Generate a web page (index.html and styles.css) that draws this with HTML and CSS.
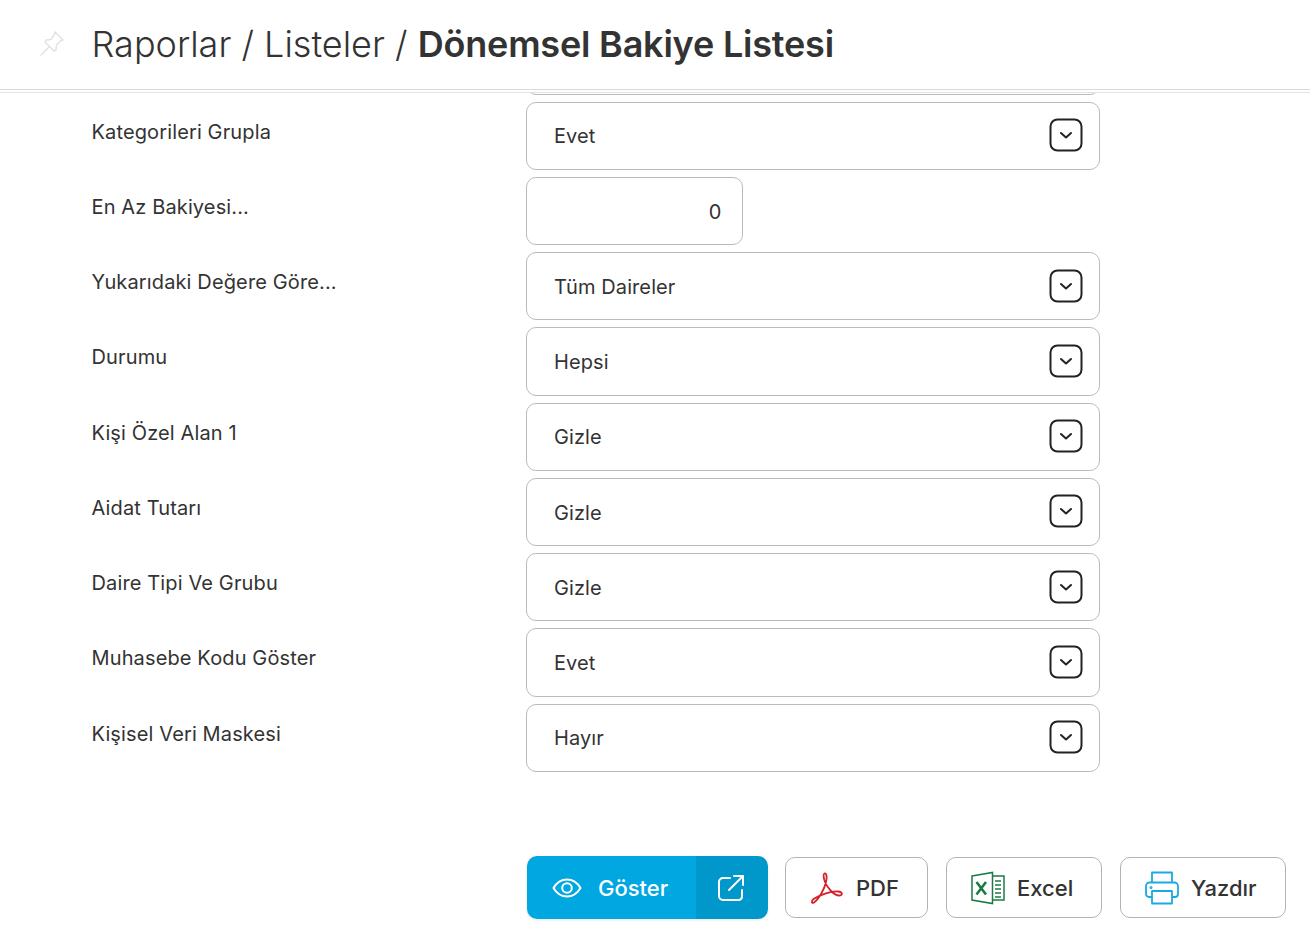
FILE: index.html
```html
<!DOCTYPE html>
<html lang="tr">
<head>
  <meta charset="UTF-8" />
  <meta name="viewport" content="width=device-width, initial-scale=1.0"/>
  <title>Dönemsel Bakiye Listesi</title>
  <link rel="stylesheet" href="styles.css">
</head>
<body>

  <header class="page-header">
    <svg class="pin" width="26" height="26" viewBox="0 0 26 26" fill="none" stroke="#e2e2e2" stroke-width="1.5" stroke-linejoin="round" stroke-linecap="round">
      <path d="M16 2 L24 10 L21.5 11 L17.5 15 L17 20 L15 21 L6 12 L7 10 L12 9.500 L15 5 Z"/>
      <path d="M10 17 L2 25"/>
    </svg>
    <h1>Raporlar / Listeler / <strong>Dönemsel Bakiye Listesi</strong></h1>
  </header>

  <main class="form-area">
    <div class="row row-hidden">
      <label></label>
      <div class="select"></div>
    </div>

    <div class="row">
      <label>Kategorileri Grupla</label>
      <div class="select"><span>Evet</span>
        <svg class="chevron" width="34" height="34" viewBox="0 0 34 34" fill="none" stroke="#222" stroke-width="2"><rect x="1.500" y="1.500" width="31" height="31" rx="7"/><path d="M12 15 L17 19.500 L22 15" stroke-linecap="round" stroke-linejoin="round"/></svg>
      </div>
    </div>

    <div class="row">
      <label>En Az Bakiyesi...</label>
      <div class="number">0</div>
    </div>

    <div class="row">
      <label>Yukarıdaki Değere Göre...</label>
      <div class="select"><span>Tüm Daireler</span>
        <svg class="chevron" width="34" height="34" viewBox="0 0 34 34" fill="none" stroke="#222" stroke-width="2"><rect x="1.500" y="1.500" width="31" height="31" rx="7"/><path d="M12 15 L17 19.500 L22 15" stroke-linecap="round" stroke-linejoin="round"/></svg>
      </div>
    </div>

    <div class="row">
      <label>Durumu</label>
      <div class="select"><span>Hepsi</span>
        <svg class="chevron" width="34" height="34" viewBox="0 0 34 34" fill="none" stroke="#222" stroke-width="2"><rect x="1.500" y="1.500" width="31" height="31" rx="7"/><path d="M12 15 L17 19.500 L22 15" stroke-linecap="round" stroke-linejoin="round"/></svg>
      </div>
    </div>

    <div class="row">
      <label>Kişi Özel Alan 1</label>
      <div class="select"><span>Gizle</span>
        <svg class="chevron" width="34" height="34" viewBox="0 0 34 34" fill="none" stroke="#222" stroke-width="2"><rect x="1.500" y="1.500" width="31" height="31" rx="7"/><path d="M12 15 L17 19.500 L22 15" stroke-linecap="round" stroke-linejoin="round"/></svg>
      </div>
    </div>

    <div class="row">
      <label>Aidat Tutarı</label>
      <div class="select"><span>Gizle</span>
        <svg class="chevron" width="34" height="34" viewBox="0 0 34 34" fill="none" stroke="#222" stroke-width="2"><rect x="1.500" y="1.500" width="31" height="31" rx="7"/><path d="M12 15 L17 19.500 L22 15" stroke-linecap="round" stroke-linejoin="round"/></svg>
      </div>
    </div>

    <div class="row">
      <label>Daire Tipi Ve Grubu</label>
      <div class="select"><span>Gizle</span>
        <svg class="chevron" width="34" height="34" viewBox="0 0 34 34" fill="none" stroke="#222" stroke-width="2"><rect x="1.500" y="1.500" width="31" height="31" rx="7"/><path d="M12 15 L17 19.500 L22 15" stroke-linecap="round" stroke-linejoin="round"/></svg>
      </div>
    </div>

    <div class="row">
      <label>Muhasebe Kodu Göster</label>
      <div class="select"><span>Evet</span>
        <svg class="chevron" width="34" height="34" viewBox="0 0 34 34" fill="none" stroke="#222" stroke-width="2"><rect x="1.500" y="1.500" width="31" height="31" rx="7"/><path d="M12 15 L17 19.500 L22 15" stroke-linecap="round" stroke-linejoin="round"/></svg>
      </div>
    </div>

    <div class="row">
      <label>Kişisel Veri Maskesi</label>
      <div class="select"><span>Hayır</span>
        <svg class="chevron" width="34" height="34" viewBox="0 0 34 34" fill="none" stroke="#222" stroke-width="2"><rect x="1.500" y="1.500" width="31" height="31" rx="7"/><path d="M12 15 L17 19.500 L22 15" stroke-linecap="round" stroke-linejoin="round"/></svg>
      </div>
    </div>
  </main>

  <footer class="actions">
    <div class="btn-main">
      <button class="btn-show">
        <svg width="30" height="22" viewBox="0 0 30 22" fill="none" stroke="#fff" stroke-width="2"><path d="M1.500 11 C5 5 9.500 2.500 15 2.500 C20.500 2.500 25 5 28.500 11 C25 17 20.500 19.500 15 19.500 C9.500 19.500 5 17 1.500 11 Z" stroke-linejoin="round"/><circle cx="15" cy="11" r="4.800"/></svg>
        Göster
      </button>
      <button class="btn-open">
        <svg width="28" height="28" viewBox="0 0 28 28" fill="none" stroke="#fff" stroke-width="2" stroke-linecap="round" stroke-linejoin="round"><path d="M13 4 H6 A4 4 0 0 0 2 8 V22 A4 4 0 0 0 6 26 H22 A3.500 3.500 0 0 0 25 22.500 V16"/><path d="M12 16 L26 2"/><path d="M17 2 H26 V11"/></svg>
      </button>
    </div>

    <button class="btn btn-pdf">
      <svg width="34" height="34" viewBox="0 0 34 34" fill="none" stroke="#d8222a" stroke-width="1.800" stroke-linejoin="round"><path d="M14.500 2.500 C17 2 17 7 16 11 C14.500 18 9 28 4 31.500 C1.500 33 1 30 3.500 28 C9 24 21 20 28 20.500 C33 21 33 24.500 29 24.500 C24 24.500 17.500 17 15 11 C13.500 7 13 3 14.500 2.500 Z"/></svg>
      PDF
    </button>

    <button class="btn btn-excel">
      <svg width="34" height="34" viewBox="0 0 34 34" fill="none" stroke="#1d7a45" stroke-width="1.500"><path d="M1 5 L21.500 1.500 V32.500 L1 29 Z"/><path d="M21.500 5 H33 V29 H21.500"/><path d="M5.500 11 L15 23.500 M15 11 L5.500 23.500" stroke-width="2.600"/><path d="M24 10 H30 M24 14 H30 M24 18 H30 M24 22 H30 M24 26 H30" stroke-width="1.600"/></svg>
      Excel
    </button>

    <button class="btn btn-print">
      <svg width="34" height="34" viewBox="0 0 34 34" fill="none" stroke="#1ba9e1" stroke-width="1.800" stroke-linejoin="round"><path d="M7 12 V1.500 H27 V12"/><path d="M7 26 H4 A3 3 0 0 1 1 23 V15 A3.500 3.500 0 0 1 4.500 11.500 H29.500 A3.500 3.500 0 0 1 33 15 V23 A3 3 0 0 1 30 26 H27"/><path d="M7 20 H27 V32.500 H7 Z"/><circle cx="6" cy="16.500" r="0.600"/></svg>
      Yazdır
    </button>
  </footer>

</body>
</html>
```

FILE: styles.css
```css
* {
  box-sizing: border-box;
}

html, body {
  height: 100%;
}

body {
  margin: 0;
  display: flex;
  flex-direction: column;
  overflow: hidden;
  font-family: Inter, "Liberation Sans", sans-serif;
  background-color: #fff;
  color: #333;
}

.page-header {
  position: relative;
  z-index: 2;
  flex: none;
  display: flex;
  align-items: center;
  height: 90px;
  padding: 0 0 2px 39px;
  background: #fff;
  border-bottom: 1px solid #d9d9d9;
  box-shadow: 0 2px 0 #fff, 0 3px 0 #e2e2e2;
}

.pin {
  margin-right: 26.500px;
  margin-top: -2px;
}

h1 {
  margin: 0;
  font-size: 36px;
  font-weight: 300;
  color: #333;
  white-space: nowrap;
}

h1 strong {
  font-weight: 600;
  letter-spacing: -0.2px;
}

.form-area {
  flex: none;
  height: 726px;
  padding-left: 91.500px;
  overflow: hidden;
}

.row {
  display: flex;
  margin-bottom: 7px;
}

.row-hidden {
  margin-top: -63.65px;
}

label {
  flex: none;
  width: 434.500px;
  padding-top: 18px;
  font-size: 20px;
  line-height: 24px;
  letter-spacing: 0.13px;
  color: #333;
}

.select, .number {
  height: 68.250px;
  border: 1px solid #bbb;
  border-radius: 10px;
  font-size: 20px;
  letter-spacing: 0.1px;
  color: #333;
}

.select {
  width: 574px;
  display: flex;
  align-items: center;
  justify-content: space-between;
  padding: 1px 16px 0 27px;
}

.select span {
  padding-top: 0.5px;
}

.chevron {
  margin-top: -2px;
}

.number {
  width: 217px;
  display: flex;
  align-items: center;
  justify-content: flex-end;
  padding: 2px 20.500px 0 0;
}

.actions {
  flex: none;
  display: flex;
  align-items: center;
  padding: 40px 0 0 527px;
}

button {
  display: flex;
  align-items: center;
  font-family: inherit;
  font-size: 22px;
  font-weight: 500;
  cursor: pointer;
}

.btn-main {
  display: flex;
  height: 63px;
  width: 241px;
  margin-right: 17px;
  border-radius: 10px;
  overflow: hidden;
  box-shadow: 0 1px 3px rgba(0,0,0,0.1);
}

.btn-show {
  width: 169px;
  padding: 0 0 0 25px;
  gap: 16px;
  background-color: #00a7e1;
  color: #fff;
  border: none;
}

.btn-open {
  width: 72px;
  justify-content: center;
  padding: 0 2px 0 0;
  background-color: #0097cb;
  border: none;
}

.btn {
  height: 61px;
  margin-right: 18px;
  padding: 0 0 0 24px;
  gap: 12px;
  background: #fff;
  color: #333;
  border: 1px solid #b3b3b3;
  border-radius: 10px;
}

.btn-pdf {
  width: 143px;
}

.btn-excel {
  width: 156px;
}

.btn-print {
  width: 166px;
  margin-right: 0;
}
```
